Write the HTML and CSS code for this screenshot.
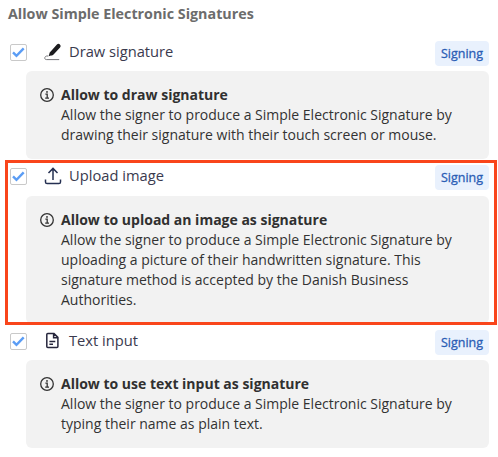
FILE: index.html
```html
<!DOCTYPE html>
<html lang="en">
<head>
    <meta charset="UTF-8">
    <title>Signature methods</title>
    <link rel="stylesheet" href="styles.css">
</head>
<body>
    <div class="container">
        <h2 class="heading">Allow Simple Electronic Signatures</h2>

        <div class="method">
            <div class="row">
                <span class="check"><svg width="17" height="17" viewBox="0 0 17 17"><path d="M3 8.3l3.5 3.5 7.2-7.4"/></svg></span>
                <svg class="icon" width="20" height="20" viewBox="0 0 20 20">
                    <path d="M8 11.2L14.5 4" stroke="#1c1c1f" stroke-width="4.2" stroke-linecap="round"/>
                    <path d="M6 9.8L9.2 12.7 4.6 14.2z" fill="#1c1c1f"/>
                    <path d="M4.2 14C1.8 13.6.5 15 .8 16.5c.2.9 1 1.1 2 1.1H15.2" stroke="#77777b" stroke-width="1"/>
                </svg>
                <span class="name">Draw signature</span>
                <span class="badge">Signing</span>
            </div>
            <div class="info">
                <svg class="info-icon" width="14" height="14" viewBox="0 0 14 14"><circle cx="7" cy="7" r="6.3"/><path d="M5.4 6.2h1.8v3.9M5.2 10.1h3.8"/><circle class="dot" cx="7" cy="3.9" r=".95"/></svg>
                <div>
                    <h3 class="title">Allow to draw signature</h3>
                    <p>Allow the signer to produce a Simple Electronic Signature by<br>drawing their signature with their touch screen or mouse.</p>
                </div>
            </div>
        </div>

        <div class="method">
            <div class="row">
                <span class="check"><svg width="17" height="17" viewBox="0 0 17 17"><path d="M3 8.3l3.5 3.5 7.2-7.4"/></svg></span>
                <svg class="icon" width="20" height="20" viewBox="0 0 20 20">
                    <path d="M9 14V2.4M4.5 7L9 2.4 13.5 7M1.5 13.4V16q0 1.6 1.6 1.6H14.9q1.6 0 1.6-1.6V13.4" stroke="#253052" stroke-width="1.5"/>
                </svg>
                <span class="name">Upload image</span>
                <span class="badge">Signing</span>
            </div>
            <div class="info">
                <svg class="info-icon" width="14" height="14" viewBox="0 0 14 14"><circle cx="7" cy="7" r="6.3"/><path d="M5.4 6.2h1.8v3.9M5.2 10.1h3.8"/><circle class="dot" cx="7" cy="3.9" r=".95"/></svg>
                <div>
                    <h3 class="title">Allow to upload an image as signature</h3>
                    <p>Allow the signer to produce a Simple Electronic Signature by<br>uploading a picture of their handwritten signature. This<br>signature method is accepted by the Danish Business<br>Authorities.</p>
                </div>
            </div>
            <div class="highlight"></div>
        </div>

        <div class="method">
            <div class="row">
                <span class="check"><svg width="17" height="17" viewBox="0 0 17 17"><path d="M3 8.3l3.5 3.5 7.2-7.4"/></svg></span>
                <svg class="icon" width="20" height="20" viewBox="0 0 20 20">
                    <path d="M3.8 2.6H10L13.9 6.4V15.6q0 1-1 1H3.8q-1 0-1-1V3.6q0-1 1-1zM9.6 2.8V6.8H13.8M5.4 10.4H11.3M5.4 13.2H9" stroke="#26263c" stroke-width="1.5"/>
                </svg>
                <span class="name">Text input</span>
                <span class="badge">Signing</span>
            </div>
            <div class="info">
                <svg class="info-icon" width="14" height="14" viewBox="0 0 14 14"><circle cx="7" cy="7" r="6.3"/><path d="M5.4 6.2h1.8v3.9M5.2 10.1h3.8"/><circle class="dot" cx="7" cy="3.9" r=".95"/></svg>
                <div>
                    <h3 class="title">Allow to use text input as signature</h3>
                    <p>Allow the signer to produce a Simple Electronic Signature by<br>typing their name as plain text.</p>
                </div>
            </div>
        </div>
    </div>
</body>
</html>
```
FILE: styles.css
```css
*{box-sizing: border-box}
body{margin: 0;background: #fff;font-family: "Open Sans", sans-serif;font-size: 14px;color: #333}
h2,h3,p{margin: 0;font-size: 14px;line-height: 20px;white-space: nowrap}
.container{width: 498px;padding: 4px 9px 0 9px}
.heading{height: 37px;margin-left: -1px;color: #6c6c6c;font-size: 14.3px;font-weight: 700}
.method{position: relative;margin-bottom: 6.1px}
.row{display: flex;align-items: flex-start;height: 25px;margin-bottom: 5.3px}
.check{width: 17px;height: 17px;margin: 3px 17px 0 1px;border: 1px solid #c9c9c9;border-radius: 2px}
.check svg{display: block;margin: -1px 0 0 -1px}
.check path{fill: none;stroke: #5b9df5;stroke-width: 2.4}
.icon{margin: 1px 5px 0 0;fill: none}
.name{line-height: 20px;color: #3a3a4e;font-size: 14.7px}
.badge{width: 54px;height: 25px;margin-left: auto;border-radius: 4px;background: #e9f1fd;color: #2a5db5;font-size: 12.5px;line-height: 25px;text-align: center;-webkit-text-stroke: .3px #2a5db5}
.info{display: flex;width: 463px;margin-left: 17px;padding: 14px 0 14px 14px;border-radius: 6px;background: #f2f2f2}
.info-icon{margin: 3px 7px 0 0;fill: none;stroke: #333;stroke-width: 1.3}
.info-icon .dot{fill: #333;stroke: none}
.title{font-weight: 700;color: #303030}
.highlight{position: absolute;left: -4px;top: -5px;width: 492px;height: 165px;border: 3px solid #f9451b}
```
